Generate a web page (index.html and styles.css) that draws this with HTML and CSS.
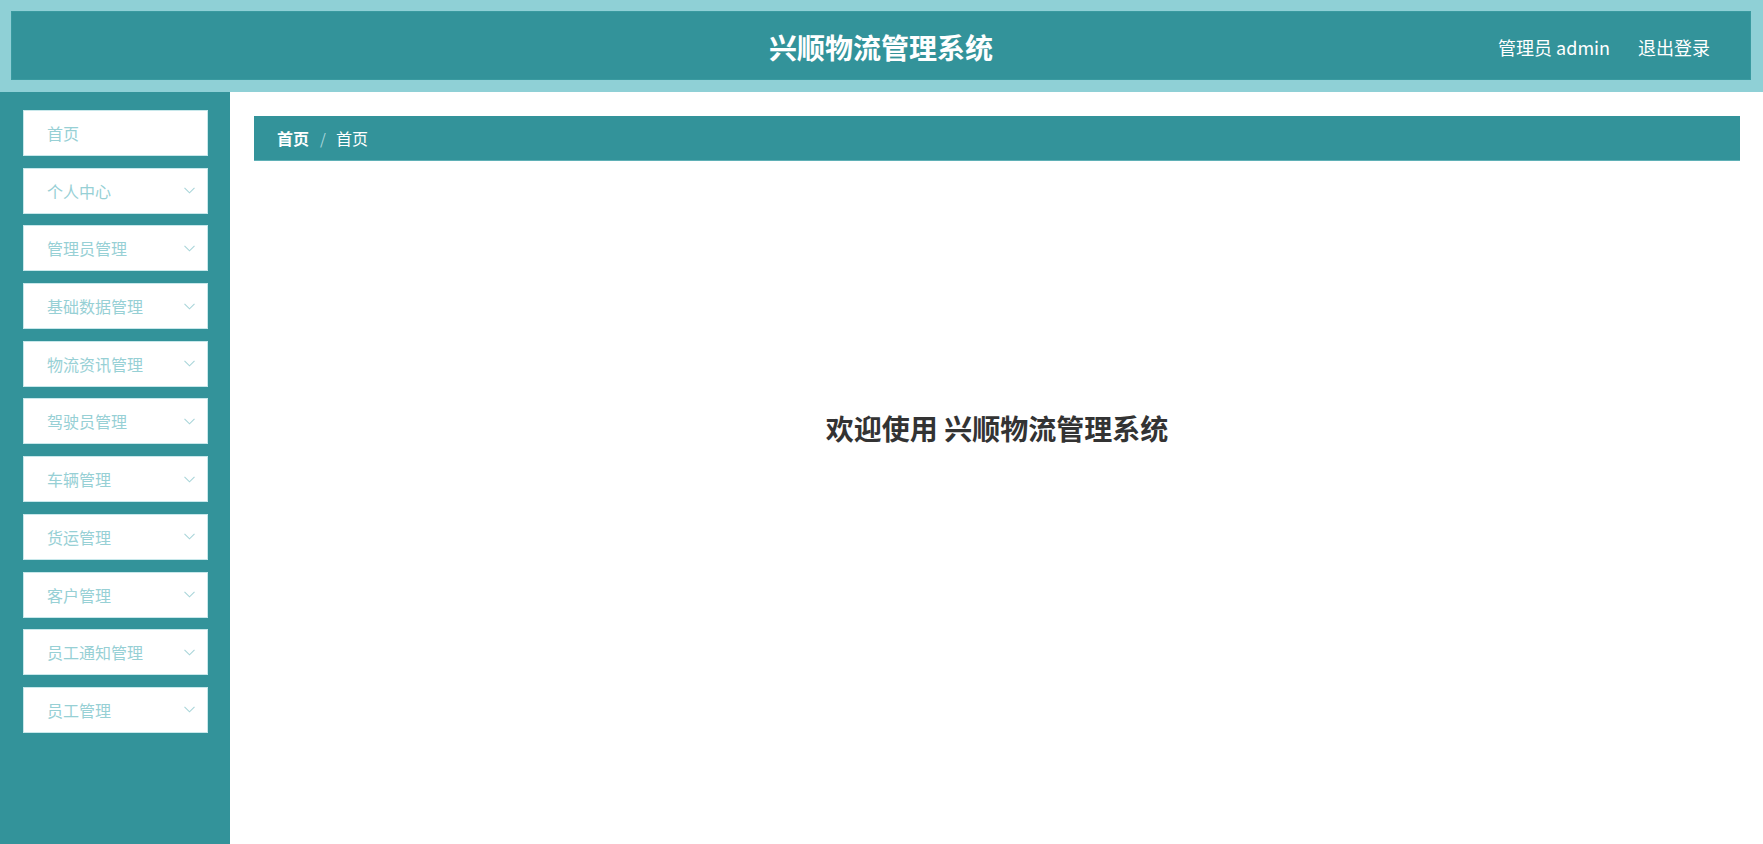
FILE: index.html
```html
<!DOCTYPE html>
<html lang="zh-CN">
<head>
<meta charset="utf-8">
<title>兴顺物流管理系统</title>
<link rel="stylesheet" href="styles.css">
</head>
<body>
<header class="topbar">
  <div class="topbar-inner">
    <div class="title">兴顺物流管理系统</div>
    <div class="user">
      <span class="user-name">管理员 admin</span>
      <span class="logout">退出登录</span>
    </div>
  </div>
</header>
<div class="main">
  <aside class="sidebar">
    <ul class="menu">
      <li class="menu-item"><span>首页</span></li>
      <li class="menu-item"><span>个人中心</span><svg class="chev" viewBox="0 0 11 7"><polyline points="0.5,0.8 5.5,5.8 10.5,0.8"/></svg></li>
      <li class="menu-item"><span>管理员管理</span><svg class="chev" viewBox="0 0 11 7"><polyline points="0.5,0.8 5.5,5.8 10.5,0.8"/></svg></li>
      <li class="menu-item"><span>基础数据管理</span><svg class="chev" viewBox="0 0 11 7"><polyline points="0.5,0.8 5.5,5.8 10.5,0.8"/></svg></li>
      <li class="menu-item"><span>物流资讯管理</span><svg class="chev" viewBox="0 0 11 7"><polyline points="0.5,0.8 5.5,5.8 10.5,0.8"/></svg></li>
      <li class="menu-item"><span>驾驶员管理</span><svg class="chev" viewBox="0 0 11 7"><polyline points="0.5,0.8 5.5,5.8 10.5,0.8"/></svg></li>
      <li class="menu-item"><span>车辆管理</span><svg class="chev" viewBox="0 0 11 7"><polyline points="0.5,0.8 5.5,5.8 10.5,0.8"/></svg></li>
      <li class="menu-item"><span>货运管理</span><svg class="chev" viewBox="0 0 11 7"><polyline points="0.5,0.8 5.5,5.8 10.5,0.8"/></svg></li>
      <li class="menu-item"><span>客户管理</span><svg class="chev" viewBox="0 0 11 7"><polyline points="0.5,0.8 5.5,5.8 10.5,0.8"/></svg></li>
      <li class="menu-item"><span>员工通知管理</span><svg class="chev" viewBox="0 0 11 7"><polyline points="0.5,0.8 5.5,5.8 10.5,0.8"/></svg></li>
      <li class="menu-item"><span>员工管理</span><svg class="chev" viewBox="0 0 11 7"><polyline points="0.5,0.8 5.5,5.8 10.5,0.8"/></svg></li>
    </ul>
  </aside>
  <main class="content">
    <nav class="breadcrumb">
      <span class="crumb crumb-strong">首页</span>
      <span class="sep">/</span>
      <span class="crumb">首页</span>
    </nav>
    <h1 class="welcome">欢迎使用 兴顺物流管理系统</h1>
  </main>
</div>
</body>
</html>
```

FILE: styles.css
```css
* { box-sizing: border-box; }
html, body {
  margin: 0;
  padding: 0;
  height: 100%;
}
body {
  font-family: "Noto Sans CJK SC", "Noto Sans", sans-serif;
  background: #ffffff;
  display: flex;
  flex-direction: column;
  overflow: hidden;
}
.topbar {
  height: 92px;
  background: #8fd0d6;
  padding: 11px 12px 12px 11px;
  flex: none;
}
.topbar-inner {
  position: relative;
  height: 69px;
  background: #33939a;
  border: 1px solid #3a9aa0;
  display: flex;
  align-items: center;
  justify-content: center;
}
.title {
  color: #ffffff;
  font-size: 28px;
  font-weight: 700;
  line-height: 1;
  margin-top: 3px;
}
.user {
  position: absolute;
  right: 40px;
  top: 0;
  bottom: 0;
  display: flex;
  align-items: center;
  gap: 28px;
  color: #ffffff;
  font-size: 18px;
  padding-top: 3px;
}
.main {
  flex: 1;
  display: flex;
  min-height: 0;
}
.sidebar {
  width: 230px;
  flex: none;
  background: #33939a;
  padding: 18px 22px 0 23px;
}
.menu {
  list-style: none;
  margin: 0;
  padding: 0;
  display: flex;
  flex-direction: column;
  gap: 11.7px;
}
.menu-item {
  height: 46px;
  background: #ffffff;
  border: 1px solid #c8e8eb;
  display: flex;
  align-items: center;
  justify-content: space-between;
  padding: 0 12px 0 23px;
  color: #97d0d5;
  font-size: 16px;
}
.chev {
  width: 11px;
  height: 7px;
  fill: none;
  stroke: #a9d5d9;
  stroke-width: 1.1;
}
.content {
  flex: 1;
  padding: 24px 23px 0 24px;
}
.breadcrumb {
  height: 45px;
  background: #33939a;
  border-bottom: 1px solid #5fb0b6;
  display: flex;
  align-items: center;
  padding-left: 23px;
  font-size: 16px;
  color: #ffffff;
}
.crumb-strong { font-weight: 700; }
.sep {
  margin: 0 10px 0 11px;
  color: #a9d6da;
  font-size: 15px;
}
.welcome {
  margin: 247px 0 0;
  text-align: center;
  font-size: 28px;
  font-weight: 700;
  line-height: 40px;
  color: #333333;
}
```
